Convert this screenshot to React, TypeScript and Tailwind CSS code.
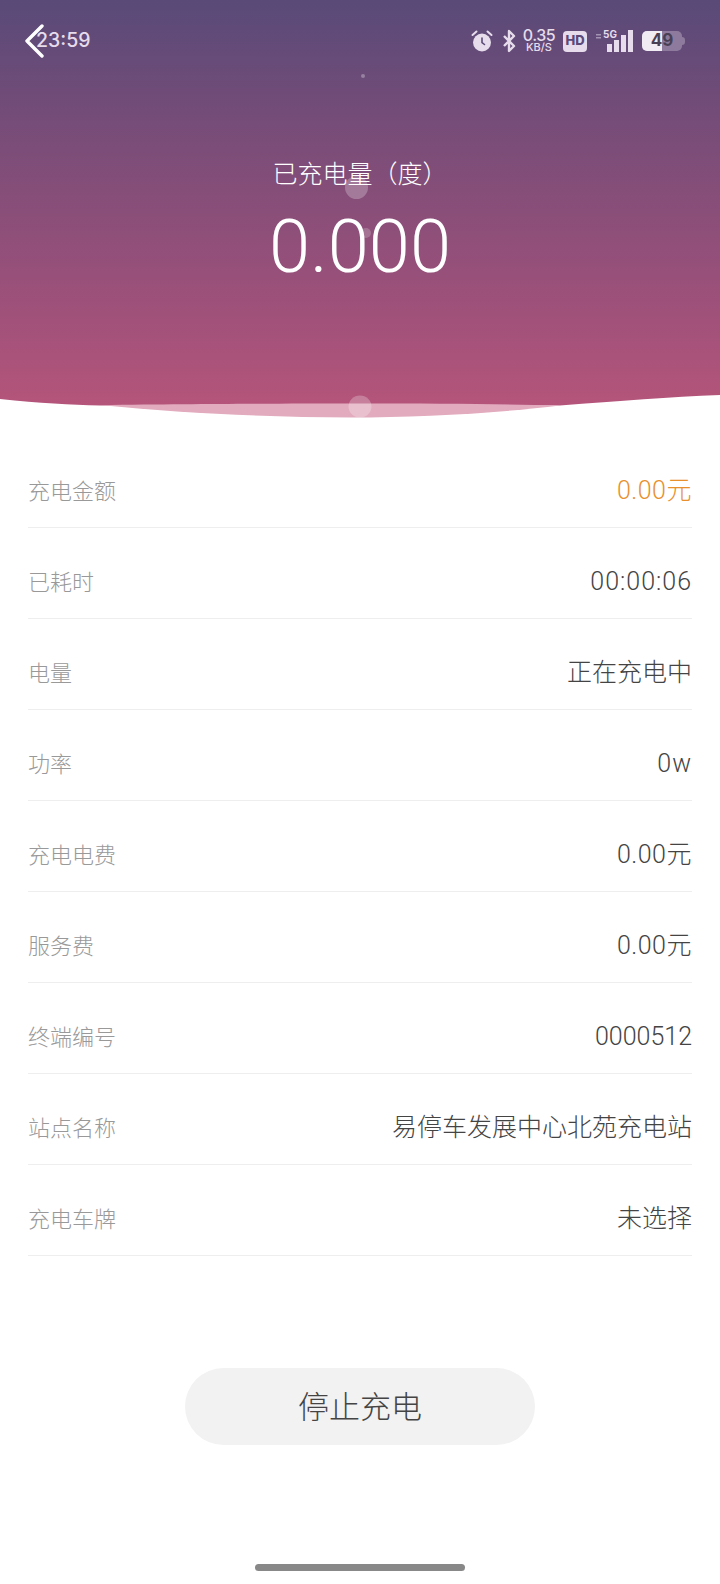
const rows: { label: string; value: string; accent?: boolean; spacing?: string }[] = [
  { label: '充电金额', value: '0.00元', accent: true, spacing: 'tracking-[0.5px]' },
  { label: '已耗时', value: '00:00:06', spacing: 'tracking-[1px]' },
  { label: '电量', value: '正在充电中' },
  { label: '功率', value: '0w', spacing: 'tracking-[1px]' },
  { label: '充电电费', value: '0.00元', spacing: 'tracking-[0.5px]' },
  { label: '服务费', value: '0.00元', spacing: 'tracking-[0.5px]' },
  { label: '终端编号', value: '0000512' },
  { label: '站点名称', value: '易停车发展中心北苑充电站' },
  { label: '充电车牌', value: '未选择' },
]

const StatusIcons = () => (
  <div className="flex items-center text-[#e6dcec]">
    {/* alarm */}
    <svg width="24" height="24" viewBox="0 0 24 24" className="mr-[8px]">
      <circle cx="12" cy="13.5" r="9" fill="currentColor" />
      <path d="M2.5 6 6.5 2.5M21.5 6 17.5 2.5" stroke="currentColor" strokeWidth="2" strokeLinecap="round" />
      <path d="M12 9v4.5l2.5 2" stroke="#5b4a78" strokeWidth="1.6" fill="none" strokeLinecap="round" />
    </svg>
    {/* bluetooth */}
    <svg width="14" height="24" viewBox="0 0 14 24" className="mr-[6px]">
      <path d="M2 7l10 10-5 5V2l5 5L2 17" stroke="currentColor" strokeWidth="2.4" fill="none" strokeLinejoin="round" />
    </svg>
    <div className="mr-[7px] flex w-[34px] flex-col items-center font-['Inter',sans-serif]">
      <span className="block text-[16px] leading-[13px] font-medium tracking-tight">0.35</span>
      <span className="block text-[11px] leading-[11px] font-medium">KB/S</span>
    </div>
    <div className="mr-[8px] flex h-[21px] w-[24px] items-center justify-center rounded-[4px] bg-[#e6dcec] font-['Inter',sans-serif] text-[13px] font-extrabold text-[#5b4a78]">
      HD
    </div>
    {/* 5G signal */}
    <div className="relative mr-[9px] h-[24px] w-[38px]">
      <span className="absolute top-[-2px] left-[8px] font-['Inter',sans-serif] text-[10px] font-bold">5G</span>
      <svg width="38" height="24" viewBox="0 0 38 24" className="absolute top-0 left-0">
        <rect x="1" y="5" width="5" height="1.5" fill="currentColor" opacity=".5" />
        <rect x="1" y="8" width="5" height="1.5" fill="currentColor" opacity=".5" />
        <rect x="12" y="15" width="5" height="8" fill="currentColor" />
        <rect x="19" y="11" width="5" height="12" fill="currentColor" />
        <rect x="26" y="6" width="5" height="17" fill="currentColor" />
        <rect x="33" y="1" width="5" height="22" fill="currentColor" />
      </svg>
    </div>
    {/* battery */}
    <div className="relative flex h-[20px] w-[40px] items-center justify-center overflow-hidden rounded-[5px] bg-[#8d7a9c] font-['Inter',sans-serif] text-[17px] font-bold text-[#4a4054]">
      <div className="absolute inset-y-0 left-0 w-[20px] bg-[#f1ebf3]" />
      <span className="relative">49</span>
    </div>
    <div className="h-[8px] w-[3px] rounded-r bg-[#8d7a9c]" />
  </div>
)

export default function App() {
  return (
    <div className="relative flex h-[1584px] w-[720px] flex-col overflow-hidden bg-white font-['Roboto','Noto_Sans_CJK_SC',sans-serif]">
      <header className="relative h-[420px] shrink-0 bg-[linear-gradient(180deg,#594a78_0%,#744c78_27%,#a0517a_75%,#b8557a_100%)] text-white">
        <div className="flex h-[82px] items-center justify-between pr-[35px] pl-[24px]">
          <div className="relative flex items-center">
            <svg width="22" height="34" viewBox="0 0 22 34">
              <path d="M18 2 3 17l15 15" stroke="#fff" strokeWidth="3.4" fill="none" strokeLinecap="round" strokeLinejoin="round" />
            </svg>
            <span className="ml-[-10px] font-['Inter',sans-serif] text-[19.5px] font-medium text-[#e6dcec]">23:59</span>
          </div>
          <StatusIcons />
        </div>
        <div className="absolute top-[74px] left-[361px] h-[4px] w-[4px] rounded-full bg-white/30" />
        <div className="absolute top-[176px] left-[345px] h-[23px] w-[23px] rounded-full bg-white/25" />
        <div className="absolute top-[228px] left-[361px] h-[10px] w-[10px] rounded-full bg-white/20" />

        <div className="relative mt-[75px] flex flex-col items-center">
          <p className="text-[25px] leading-[36px] font-light">已充电量（度）</p>
          <p className="mt-[12px] text-[74px] leading-[84px] font-light">0.000</p>
        </div>

        {/* wave edge */}
        <svg width="720" height="40" viewBox="0 0 720 40" className="absolute bottom-0 left-0">
          <path d="M0 19C40 23 70 25 100 25.5L560 25.5C620 21 670 17 720 15V40H0Z" fill="#fff" />
          <path d="M100 25C200 24 260 23.5 360 23.5C440 23.5 500 24 560 25.5C500 33 420 37.5 350 37.5C270 37.5 180 33 100 25Z" fill="#e2abbe" />
          <ellipse cx="360" cy="26.5" rx="11.5" ry="11" fill="#fff" opacity=".25" />
        </svg>
      </header>

      <section className="mt-[17px] px-[28px]">
        {rows.map((row) => (
          <div key={row.label} className="flex h-[91px] items-center justify-between border-b border-[#eeeeee] pt-[18px]">
            <span className="text-[22px] font-light text-[#999999]">{row.label}</span>
            <span className={`text-[25px] font-light ${row.spacing ?? ''} ${row.accent ? 'text-[#e8902e]' : 'text-[#444444]'}`}>{row.value}</span>
          </div>
        ))}
      </section>

      <div className="mt-[112px] flex justify-center">
        <button type="button" className="h-[77px] w-[350px] rounded-full bg-[#f2f2f2] pt-[3px] text-[31px] font-light text-[#444444]">
          停止充电
        </button>
      </div>

      <div className="absolute bottom-[13px] left-[255px] h-[7px] w-[210px] rounded-full bg-[#888888]" />
    </div>
  )
}
